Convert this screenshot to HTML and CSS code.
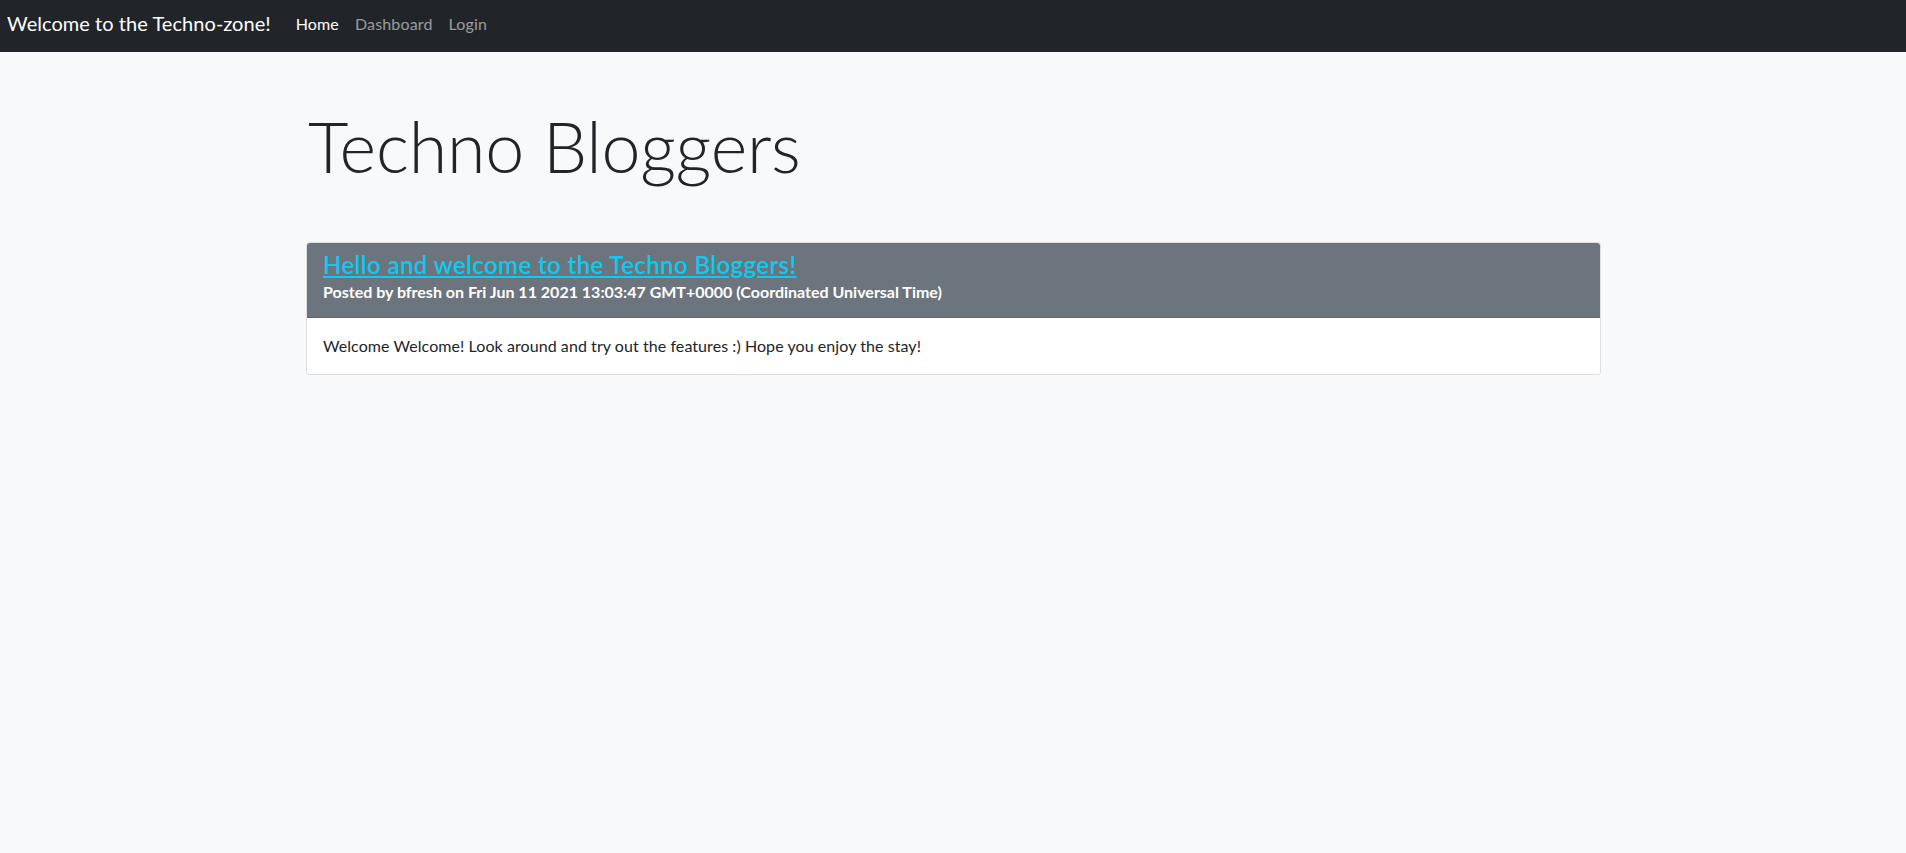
FILE: index.html
```html
<!DOCTYPE html>
<html lang="en">
<head>
<meta charset="utf-8">
<title>Techno Bloggers</title>
<link rel="stylesheet" href="styles.css">
</head>
<body>
<nav class="navbar">
  <a class="brand" href="#">Welcome to the Techno-zone!</a>
  <ul class="nav">
    <li><a class="nav-link active" href="#">Home</a></li>
    <li><a class="nav-link" href="#">Dashboard</a></li>
    <li><a class="nav-link" href="#">Login</a></li>
  </ul>
</nav>
<main class="container">
  <h1 class="display">Techno Bloggers</h1>
  <section class="card">
    <header class="card-header">
      <h4 class="post-title"><a href="#">Hello and welcome to the Techno Bloggers!</a></h4>
      <h6 class="post-meta">Posted by bfresh on Fri Jun 11 2021 13:03:47 GMT+0000 (Coordinated Universal Time)</h6>
    </header>
    <div class="card-body">
      <p class="post-text">Welcome Welcome! Look around and try out the features :) Hope you enjoy the stay!</p>
    </div>
  </section>
</main>
</body>
</html>
```
FILE: styles.css
```css
* { box-sizing: border-box; }
html, body { margin: 0; padding: 0; }
body {
  background: #f8f9fa;
  color: #212529;
  font-family: "Lato", "Open Sans", sans-serif;
  font-size: 16px;
  line-height: 1.5;
  min-height: 853px;
}
a { text-decoration: none; }

.navbar {
  display: flex;
  align-items: flex-start;
  height: 52px;
  padding: 8px 7px 0;
  background: #212529;
}
.brand {
  font-size: 20px;
  line-height: 30px;
  color: #fff;
  margin-right: 17px;
  letter-spacing: 0.05px;
  white-space: nowrap;
}
.nav {
  display: flex;
  list-style: none;
  margin: 4px 0 0;
  padding: 0;
}
.nav-link {
  display: block;
  padding: 0 8px;
  line-height: 24px;
  letter-spacing: 0.15px;
  color: rgba(255, 255, 255, 0.55);
}
.nav-link.active { color: #fff; }

.container {
  width: 1320px;
  max-width: 100%;
  margin: 0 auto;
  padding: 52px 12px 0;
}
.display {
  margin: 0 0 54px;
  padding-left: 3px;
  font-size: 70px;
  font-weight: 300;
  line-height: 1.2;
  letter-spacing: -0.2px;
  color: #212529;
}

.card {
  margin-left: 1px;
  background: #fff;
  border: 1px solid rgba(0, 0, 0, 0.125);
  border-radius: 4px;
  overflow: hidden;
}
.card-header {
  background: #6c757d;
  padding: 8px 16px 13px;
  border-bottom: 1px solid rgba(0, 0, 0, 0.125);
}
.post-title {
  margin: 0;
  font-size: 24px;
  font-weight: 600;
  line-height: 1.2;
  letter-spacing: 0.4px;
}
.post-title a {
  color: #0dcaf0;
  text-decoration: underline;
}
.post-meta {
  margin: 0;
  font-size: 16px;
  font-weight: 700;
  line-height: 24px;
  color: #fff;
}
.card-body { padding: 16px; }
.post-text {
  margin: 0;
  line-height: 24px;
  letter-spacing: 0.07px;
}
```
